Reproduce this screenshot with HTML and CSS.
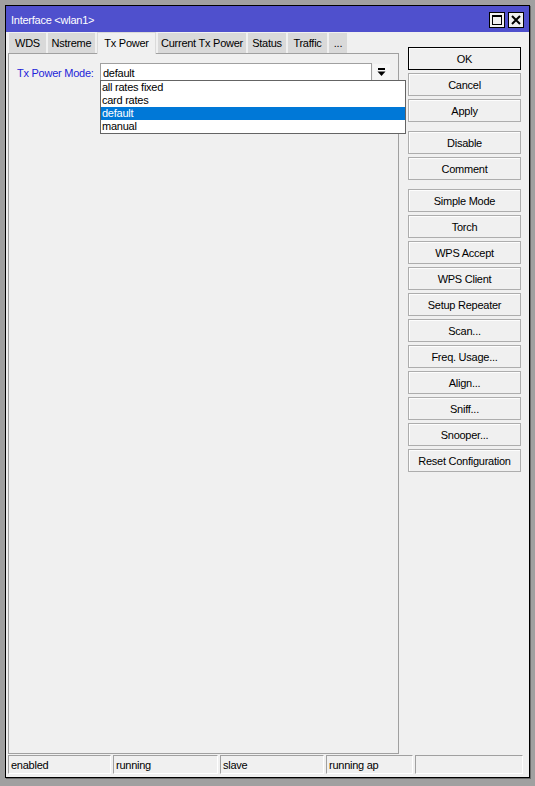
FILE: index.html
```html
<!doctype html>
<html lang="en">
    <head>
        <meta charset="utf8">
        <link rel="stylesheet" href="styles.css">
    </head>
    <body>
        <div class="window">
            <div class="title-bar">
                <span class="title">Interface &lt;wlan1&gt;</span>
                <span class="title-btn">
                    <svg width="12" height="12" viewBox="0 0 12 12"><rect x="1.5" y="1.5" width="9" height="9" fill="none" stroke="#000" stroke-width="1"/><line x1="1" y1="2" x2="11" y2="2" stroke="#000" stroke-width="2"/></svg>
                </span>
                <span class="title-btn">
                    <svg width="12" height="12" viewBox="0 0 12 12"><path d="M2 2 L10 10 M10 2 L2 10" stroke="#000" stroke-width="2"/></svg>
                </span>
            </div>
            <div class="window-body">
                <div class="left">
                    <ul class="tabs">
                        <li class="tab t-wds">WDS</li>
                        <li class="tab t-nstreme">Nstreme</li>
                        <li class="tab t-txpower active">Tx Power</li>
                        <li class="tab t-current">Current Tx Power</li>
                        <li class="tab t-status">Status</li>
                        <li class="tab t-traffic">Traffic</li>
                        <li class="tab t-more">...</li>
                    </ul>
                    <div class="panel">
                        <div class="field">
                            <label class="field-label">Tx Power Mode:</label>
                            <div class="select">
                                <span class="select-value">default</span>
                            </div>
                            <span class="select-btn">
                                <svg width="9" height="9" viewBox="0 0 9 9"><rect x="1" y="0" width="7" height="2" fill="#000"/><path d="M0.5 3.5 H8.5 L4.5 8 Z" fill="#000"/></svg>
                            </span>
                            <ul class="dropdown">
                                <li>all rates fixed</li>
                                <li>card rates</li>
                                <li class="selected">default</li>
                                <li>manual</li>
                            </ul>
                        </div>
                    </div>
                </div>
                <div class="buttons">
                    <button class="btn default">OK</button>
                    <button class="btn">Cancel</button>
                    <button class="btn">Apply</button>
                    <button class="btn group">Disable</button>
                    <button class="btn">Comment</button>
                    <button class="btn group">Simple Mode</button>
                    <button class="btn">Torch</button>
                    <button class="btn">WPS Accept</button>
                    <button class="btn">WPS Client</button>
                    <button class="btn">Setup Repeater</button>
                    <button class="btn">Scan...</button>
                    <button class="btn">Freq. Usage...</button>
                    <button class="btn">Align...</button>
                    <button class="btn">Sniff...</button>
                    <button class="btn">Snooper...</button>
                    <button class="btn">Reset Configuration</button>
                </div>
            </div>
            <div class="status-bar">
                <span class="status-cell c1">enabled</span>
                <span class="status-cell c2">running</span>
                <span class="status-cell c3">slave</span>
                <span class="status-cell c4">running ap</span>
                <span class="status-cell c5"></span>
            </div>
        </div>
    </body>
</html>
```

FILE: styles.css
```css
html, body {
    height: 100%;
}
body {
    background-color: #a0a0a0;
    font-family: "Liberation Sans", Arial, sans-serif;
    font-size: 11px;
    letter-spacing: -0.25px;
    margin: 0;
    padding: 5px 0 0 5px;
    box-sizing: border-box;
}
.window {
    background: #f0f0f0;
    border: 1px solid #000;
    box-shadow: 1px 1px 0 #6a6a6a;
    display: flex;
    flex-direction: column;
    height: 773px;
    width: 525px;
    box-sizing: border-box;
}
.title-bar {
    align-items: center;
    background: #4f50cd;
    color: #fff;
    display: flex;
    gap: 3px;
    height: 26px;
    padding: 1px 5px 0 5px;
    box-sizing: border-box;
}
.title {
    flex: 1;
}
.title-btn {
    align-items: center;
    background: #f0f0f0;
    border: 1px solid #000;
    display: flex;
    height: 14px;
    justify-content: center;
    width: 14px;
}
.window-body {
    display: flex;
    flex: 1;
    padding: 0 0 0 2px;
}
.left {
    display: flex;
    flex-direction: column;
    width: 391px;
}
.tabs {
    align-items: flex-end;
    display: flex;
    gap: 2px;
    height: 21px;
    list-style: none;
    margin: 0;
    padding: 0 0 0 1px;
}
.tab {
    background: #d9d9d9;
    height: 20px;
    line-height: 21px;
    text-align: center;
    white-space: nowrap;
    box-sizing: border-box;
}
.tab.active {
    background: #f0f0f0;
    border: 1px solid #dadada;
    border-bottom: none;
    height: 22px;
    line-height: 20px;
    margin-bottom: -1px;
    position: relative;
    z-index: 1;
}
.t-wds { width: 37px; }
.t-nstreme { width: 47px; }
.t-txpower { width: 59px; }
.t-current { width: 88px; }
.t-status { width: 38px; }
.t-traffic { width: 39px; }
.t-more { width: 18px; }
.panel {
    border: 1px solid #a0a0a0;
    flex: 1;
    box-sizing: border-box;
}
.field {
    align-items: center;
    display: flex;
    height: 19px;
    margin: 9px 0 0 8px;
    position: relative;
}
.field-label {
    color: #2323d9;
    width: 83px;
}
.select {
    align-items: center;
    background: #fff;
    border: 1px solid #a0a0a0;
    display: flex;
    height: 19px;
    padding-left: 2px;
    width: 272px;
    box-sizing: border-box;
}
.select-btn {
    align-items: center;
    background: #f6f6f6;
    display: flex;
    height: 17px;
    justify-content: center;
    margin-left: 1px;
    width: 17px;
}
.dropdown {
    background: #fff;
    border: 1px solid #646464;
    left: 83px;
    list-style: none;
    margin: 0;
    padding: 0;
    position: absolute;
    top: 17px;
    width: 306px;
    z-index: 5;
    box-sizing: border-box;
}
.dropdown li {
    height: 13px;
    line-height: 13px;
    padding-left: 1px;
}
.dropdown li.selected {
    background: #0078d7;
    color: #fff;
}
.buttons {
    display: flex;
    flex-direction: column;
    gap: 3px;
    margin: 15px 0 0 9px;
    width: 113px;
}
.btn {
    background: #f0f0f0;
    border: 1px solid #adadad;
    box-shadow: inset 1px 1px 0 #fdfdfd;
    color: #000;
    font-family: inherit;
    font-size: 11px;
    letter-spacing: inherit;
    height: 23px;
    padding: 0;
}
.btn.default {
    border-color: #000;
}
.btn.group {
    margin-top: 6px;
}
.status-bar {
    display: flex;
    gap: 2px;
    height: 19px;
    margin: 1px 0 3px 2px;
}
.status-cell {
    align-items: center;
    border-color: #a0a0a0 #fff #fff #a0a0a0;
    border-style: solid;
    border-width: 1px;
    display: flex;
    padding-left: 2px;
    box-sizing: border-box;
}
.c1 { width: 103px; }
.c2 { width: 105px; }
.c3 { width: 104px; }
.c4 { width: 87px; }
.c5 { width: 108px; }
```
